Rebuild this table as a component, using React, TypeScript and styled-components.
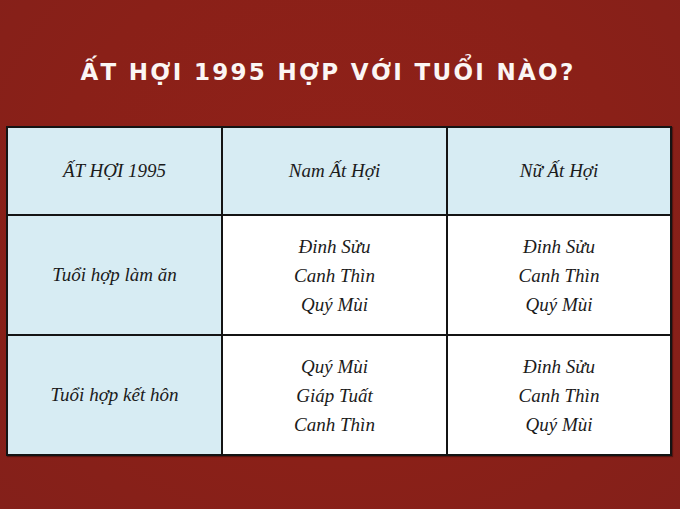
import React from "react";
import styled, { createGlobalStyle } from "styled-components";

const GlobalStyle = createGlobalStyle`
  html, body {
    margin: 0;
    padding: 0;
  }
  body {
    width: 680px;
    height: 509px;
    overflow: hidden;
    background: #8b2119;
  }
`;

const Page = styled.div`
  width: 680px;
  height: 509px;
  box-sizing: border-box;
  padding: 52px 8px 0 6px;
  display: flex;
  flex-direction: column;
  align-items: center;
  background: radial-gradient(ellipse at 50% 40%, #902119 0%, #8a2018 60%, #84201a 100%);
`;

const Title = styled.h1`
  margin: 0 22px 0 0;
  height: 40px;
  line-height: 40px;
  font-family: "DejaVu Sans", "Liberation Sans", sans-serif;
  font-weight: 700;
  font-size: 23px;
  letter-spacing: 2.3px;
  color: #fbf6f4;
  text-transform: uppercase;
`;

const Table = styled.div`
  margin-top: 34px;
  width: 666px;
  display: grid;
  grid-template-columns: 213px 223px 222px;
  grid-template-rows: 86px 118px 118px;
  border: 2px solid #141414;
  box-sizing: border-box;
  background: #141414;
  gap: 2px;
  box-shadow: 1px 1px 1px rgba(0, 0, 0, 0.35);
`;

const Cell = styled.div<{ $tinted?: boolean }>`
  display: flex;
  flex-direction: column;
  align-items: center;
  justify-content: center;
  background: ${(p) => (p.$tinted ? "#d7ecf3" : "#ffffff")};
  font-family: "Liberation Serif", "DejaVu Serif", serif;
  font-style: italic;
  font-size: 19px;
  color: #1b1b1b;
`;

const Line = styled.div`
  line-height: 29px;
`;

const header = ["ẤT HỢI 1995", "Nam Ất Hợi", "Nữ Ất Hợi"];

const rows: { label: string; male: string[]; female: string[] }[] = [
  {
    label: "Tuổi hợp làm ăn",
    male: ["Đinh Sửu", "Canh Thìn", "Quý Mùi"],
    female: ["Đinh Sửu", "Canh Thìn", "Quý Mùi"],
  },
  {
    label: "Tuổi hợp kết hôn",
    male: ["Quý Mùi", "Giáp Tuất", "Canh Thìn"],
    female: ["Đinh Sửu", "Canh Thìn", "Quý Mùi"],
  },
];

export default function App() {
  return (
    <>
      <GlobalStyle />
      <Page>
        <Title>Ất Hợi 1995 hợp với tuổi nào?</Title>
        <Table>
          {header.map((h) => (
            <Cell key={h} $tinted>
              {h}
            </Cell>
          ))}
          {rows.map((r) => (
            <React.Fragment key={r.label}>
              <Cell $tinted>{r.label}</Cell>
              <Cell>
                {r.male.map((n) => (
                  <Line key={n}>{n}</Line>
                ))}
              </Cell>
              <Cell>
                {r.female.map((n) => (
                  <Line key={n}>{n}</Line>
                ))}
              </Cell>
            </React.Fragment>
          ))}
        </Table>
      </Page>
    </>
  );
}
